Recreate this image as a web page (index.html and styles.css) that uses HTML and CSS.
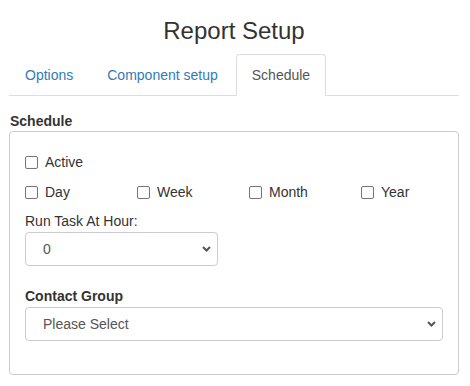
FILE: index.html
```html
<html>
<head>
  <meta charset="utf-8">
  <title>Report Setup</title>
  <link rel="stylesheet" href="styles.css">
</head>
<body>
  <div class="page">
    <h3 class="title">Report Setup</h3>
    <ul class="tabs">
      <li><a href="#">Options</a></li>
      <li><a href="#">Component setup</a></li>
      <li class="active"><a href="#">Schedule</a></li>
    </ul>
    <label class="section-label">Schedule</label>
    <div class="panel">
      <label class="check"><input type="checkbox"> Active</label>
      <div class="period-row">
        <label class="check"><input type="checkbox"> Day</label>
        <label class="check"><input type="checkbox"> Week</label>
        <label class="check"><input type="checkbox"> Month</label>
        <label class="check"><input type="checkbox"> Year</label>
      </div>
      <div class="field">
        <span class="field-label">Run Task At Hour:</span>
        <div class="select-wrap hour">
          <select class="control">
            <option>0</option>
          </select>
          <svg class="chevron" width="9" height="6" viewBox="0 0 9 6"><path d="M1 1 L4.5 4.5 L8 1" fill="none" stroke="#555" stroke-width="2"/></svg>
        </div>
      </div>
      <div class="field group">
        <span class="field-label bold">Contact Group</span>
        <div class="select-wrap">
          <select class="control">
            <option>Please Select</option>
          </select>
          <svg class="chevron" width="9" height="6" viewBox="0 0 9 6"><path d="M1 1 L4.5 4.5 L8 1" fill="none" stroke="#555" stroke-width="2"/></svg>
        </div>
      </div>
    </div>
  </div>
</body>
</html>
```

FILE: styles.css
```css
* { box-sizing: border-box; }
body {
  margin: 0;
  font-family: "Liberation Sans", Arial, sans-serif;
  font-size: 14px;
  line-height: 20px;
  color: #333;
}
.page {
  width: 450px;
  margin-left: 9px;
}
.title {
  margin: 18px 0 10px;
  font-size: 24px;
  font-weight: 500;
  line-height: 26px;
  text-align: center;
}
.tabs {
  display: flex;
  list-style: none;
  margin: 0;
  padding: 0;
  border-bottom: 1px solid #ddd;
}
.tabs li { margin-bottom: -1px; }
.tabs a {
  display: block;
  padding: 10px 15px;
  margin-right: 2px;
  border: 1px solid transparent;
  border-radius: 4px 4px 0 0;
  color: #337ab7;
  text-decoration: none;
}
.tabs .active a {
  color: #555;
  background: #fff;
  border-color: #ddd #ddd transparent;
}
.section-label {
  display: block;
  margin-top: 15px;
  margin-left: 1px;
  font-weight: bold;
}
.panel {
  border: 1px solid #ccc;
  border-radius: 4px;
  padding: 20px 15px 33px;
}
.check {
  display: flex;
  align-items: center;
  height: 20px;
}
.check input {
  appearance: none;
  width: 13px;
  height: 13px;
  margin: 0 7px 0 0;
  border: 1px solid #767676;
  border-radius: 2px;
  background: #fff;
}
.period-row {
  display: grid;
  grid-template-columns: repeat(4, 112px);
  margin-top: 10px;
}
.field { margin-top: 9px; }
.field-label { display: block; }
.field-label.bold { font-weight: bold; }
.group { margin-top: 20px; }
.select-wrap {
  position: relative;
  margin-top: 1px;
}
.select-wrap.hour { width: 193px; }
.control {
  appearance: none;
  display: block;
  width: 100%;
  height: 34px;
  padding: 6px 12px 6px 17px;
  border: 1px solid #ccc;
  border-radius: 4px;
  background: #fff;
  color: #555;
  font-family: inherit;
  font-size: 14px;
}
.chevron {
  position: absolute;
  right: 7px;
  top: 14px;
}
```
